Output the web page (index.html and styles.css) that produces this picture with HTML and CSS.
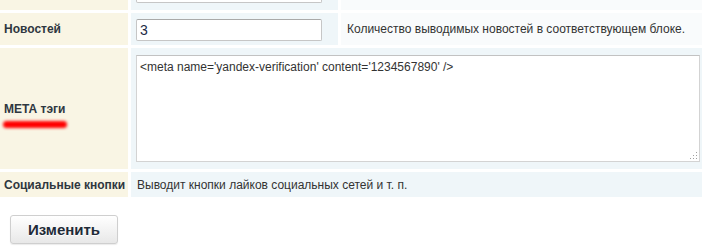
FILE: index.html
```html
<!DOCTYPE html>
<html lang="ru">
<head>
<meta charset="utf-8">
<title>Настройки</title>
<link rel="stylesheet" href="styles.css">
</head>
<body>
<div class="form">
  <div class="label row-first">Время кэширования</div>
  <div class="field row-first-field"><input class="text" type="text" value="Период обновления страниц, д"></div>
  <div class="hint row-first">Период обновления страницы (в секундах) для кэша группы.</div>

  <div class="label">Новостей</div>
  <div class="field"><input class="text" type="text" value="3"></div>
  <div class="hint">Количество выводимых новостей в соответствующем блоке.</div>

  <div class="label label-meta">МЕТА тэги<span class="mark"></span></div>
  <div class="field field-wide field-area">
    <textarea class="area">&lt;meta name='yandex-verification' content='1234567890' /&gt;</textarea>
    <svg class="grip" width="8" height="8" viewBox="0 0 8 8" aria-hidden="true">
      <rect x="6" y="0" width="1" height="1" fill="#a0a0a0"/>
      <rect x="3" y="3" width="1" height="1" fill="#a0a0a0"/>
      <rect x="6" y="3" width="1" height="1" fill="#a0a0a0"/>
      <rect x="0" y="6" width="1" height="1" fill="#a0a0a0"/>
      <rect x="3" y="6" width="1" height="1" fill="#a0a0a0"/>
      <rect x="6" y="6" width="1" height="1" fill="#a0a0a0"/>
    </svg>
  </div>

  <div class="label">Социальные кнопки</div>
  <div class="field field-wide field-text">Выводит кнопки лайков социальных сетей и т. п.</div>
</div>
<div class="actions"><button class="btn" type="button">Изменить</button></div>
</body>
</html>
```

FILE: styles.css
```css
html, body {
  margin: 0;
  padding: 0;
  background: #fff;
}
body {
  width: 702px;
  height: 247px;
  overflow: hidden;
  font-family: "Liberation Sans", Arial, sans-serif;
  font-size: 12px;
  color: #333;
}
.form {
  display: grid;
  grid-template-columns: 128px 207px 1fr;
  grid-template-rows: 35px 32px 121px 25px;
  column-gap: 3px;
  row-gap: 3px;
  margin-top: -25px;
}
.label {
  background: #f9f5e4;
  font-weight: bold;
  color: #2f3740;
  padding-left: 4px;
  display: flex;
  align-items: center;
}
.row-first {
  padding-bottom: 6px;
  box-sizing: border-box;
}
.row-first-field {
  padding-top: 8px;
}
.label-meta {
  position: relative;
}
.mark {
  position: absolute;
  left: 3px;
  top: 73px;
  width: 64px;
  height: 7px;
  border-radius: 4px;
  background: #ff0000;
  filter: blur(1.6px);
}
.field {
  background: #eff6f9;
  padding: 6px 0 0 5px;
  box-sizing: border-box;
}
.field-wide {
  grid-column: 2 / 4;
}
.field-area {
  position: relative;
  padding: 7px 2px 7px 5px;
}
.grip {
  position: absolute;
  right: 4px;
  bottom: 9px;
}
.field-text {
  padding: 0 0 0 6px;
  display: flex;
  align-items: center;
}
.hint {
  background: #f9fbfc;
  padding-left: 6px;
  display: flex;
  align-items: center;
}
.text {
  box-sizing: border-box;
  width: 186px;
  height: 22px;
  margin: 0;
  padding: 0 3px;
  border: 1px solid #c6c6c6;
  border-top-color: #a9a9a9;
  border-radius: 2px;
  font-family: "Liberation Sans", Arial, sans-serif;
  font-size: 14px;
  color: #1b2a44;
  background: #fff;
  outline: none;
}
.area {
  display: block;
  box-sizing: border-box;
  width: 564px;
  height: 107px;
  margin: 0;
  padding: 4px 3px;
  border: 1px solid #d3d3d3;
  border-top-color: #c2c2c2;
  font-family: "Liberation Sans", Arial, sans-serif;
  font-size: 12px;
  line-height: 15px;
  color: #333;
  background: #fff;
  outline: none;
  resize: none;
}
.actions {
  padding: 18px 0 0 10px;
}
.btn {
  box-sizing: border-box;
  width: 108px;
  height: 29px;
  margin: 0;
  border: 1px solid #cfcfcf;
  border-radius: 3px;
  background: linear-gradient(#ffffff, #e8e8e8);
  box-shadow: 0 1px 1px rgba(0, 0, 0, 0.08);
  font-family: "Liberation Sans", Arial, sans-serif;
  font-size: 15px;
  font-weight: bold;
  color: #1f2b38;
  text-shadow: 0 1px 0 #fff;
  cursor: pointer;
}
```
